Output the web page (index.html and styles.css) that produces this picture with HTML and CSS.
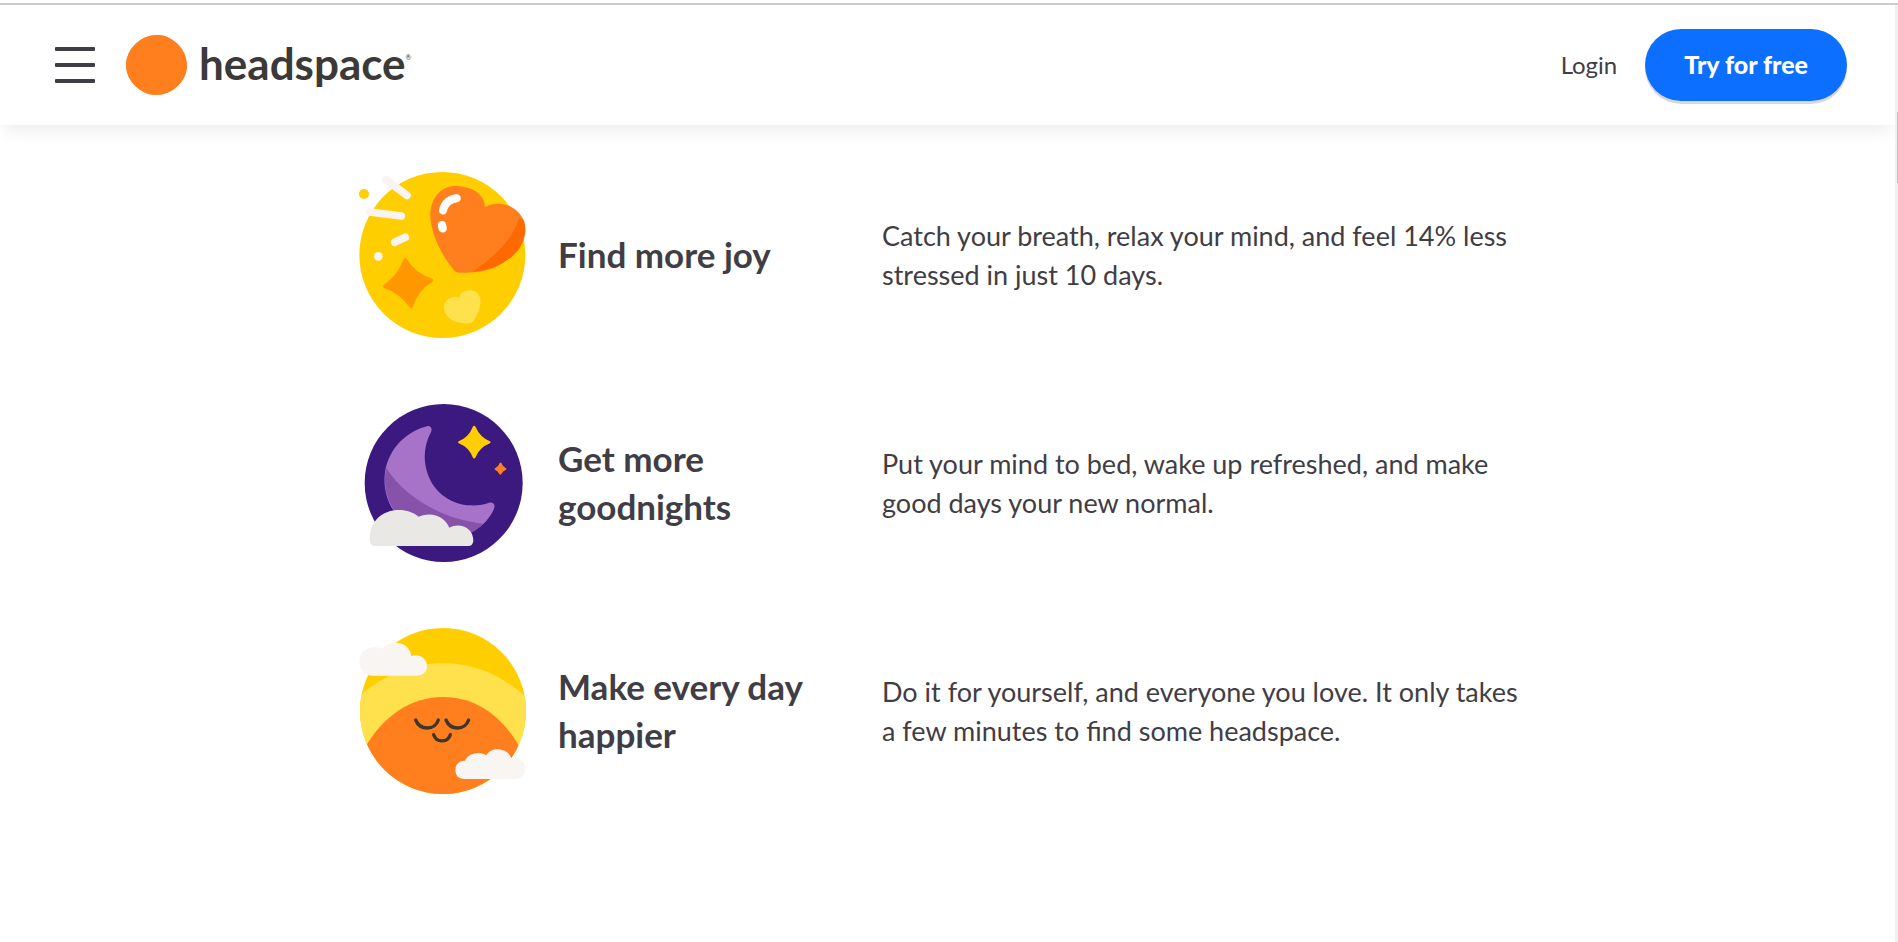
FILE: index.html
```html
<!DOCTYPE html>
<html lang="en">
<head>
<meta charset="utf-8">
<title>Headspace</title>
<link rel="stylesheet" href="styles.css">
</head>
<body>
<div class="window">
  <div class="page">
    <header class="header">
      <button class="menu" type="button" aria-label="Menu"><span class="bar"></span><span class="bar"></span><span class="bar"></span></button>
      <a class="logo" href="#">
        <svg class="logo-dot" viewBox="0 0 61 60" aria-hidden="true"><path fill="#ff7f1f" d="M32 0C39 0 45 3 51 9C57 15 61 22 61 31C61 39 57 46 51 51C44 57 38 60 29 60C21 60 15 56 9 50C3 44 0 38 0 30C0 22 4 14 10 9C16 3 23 0 32 0Z"/><ellipse cx="30.5" cy="30" rx="30.2" ry="29.8" fill="#ff7f1f"/></svg>
        <span class="wordmark">headspace</span><span class="mark">®</span>
      </a>
      <nav class="actions">
        <a class="login" href="#">Login</a>
        <button class="cta" type="button">Try for free</button>
      </nav>
    </header>
    <main class="benefits">
      <section class="benefit">
        <svg class="art" viewBox="45 0 540 570" aria-hidden="true">
          <circle cx="310" cy="285" r="249" fill="#ffce00"/>
          <circle cx="75" cy="102" r="15" fill="#ffce00"/>
          <g stroke="#f9f4f2" stroke-width="23" stroke-linecap="round"><path d="M141 59L204 106M92 156L187 168M167 247L199 232"/></g>
          <circle cx="118" cy="289" r="13" fill="#f9f4f2"/>
          <path fill="#ff9800" d="M194 297Q199 291 204 298Q229 340 281 357Q285 361 280 366Q237 390 221 442Q217 447 212 442Q184 401 134 383Q130 379 134 375Q175 347 194 297Z"/>
          <path fill="#ff7f1f" d="M347 333C316 298 266 215 275 148C288 87 330 72 372 80C412 86 437 110 438 141C480 119 535 134 555 183C568 240 528 290 478 317C432 339 391 338 360 338Q352 338 347 333Z"/>
          <path fill="#ff6a00" d="M540 174C523 235 470 287 402 335C455 331 510 308 542 265C563 230 561 203 555 183Q549 174 540 174Z"/>
          <path d="M312 151Q320 119 353 115" fill="none" stroke="#fff" stroke-width="24" stroke-linecap="round"/>
          <path d="M309 195L311 205" fill="none" stroke="#fff" stroke-width="25" stroke-linecap="round"/>
          <path fill="#ffe04d" d="M400 486C415 470 427 438 424 417C420 398 408 391 392 391C376 391 362 400 361 413C342 404 321 417 315 434C310 456 327 474 345 483C363 491 380 490 394 490Z"/>
        </svg>
        <h2 class="title">Find more joy</h2>
        <p class="text">Catch your breath, relax your mind, and feel 14% less stressed in just 10 days.</p>
      </section>
      <section class="benefit">
        <svg class="art" viewBox="45 -6 540 570" aria-hidden="true">
          <circle cx="314" cy="279" r="237" fill="#3b197f"/>
          <path fill="#a673c9" d="M259 110C272 103 282 113 276 126C255 165 252 210 265 248C284 310 340 344 394 346C418 347 437 343 451 338C463 336 470 345 465 356C436 425 354 456 274 438C190 420 130 343 137 257C142 190 190 129 259 110Z"/>
          <path fill="#8753aa" d="M142 235C200 325 315 389 433 401C385 452 303 455 240 426C165 393 125 309 142 235Z"/>
          <path fill="#ffce00" d="M401 111Q405 104 410 111Q423 142 453 154Q457 157 453 160Q422 172 410 202Q405 209 401 202Q390 172 359 160Q355 157 359 154Q390 141 401 111Z"/>
          <path fill="#ff7f1f" d="M482 219Q484 216 487 219Q491 230 501 235Q504 237 501 239Q491 243 487 252Q484 256 481 252Q477 243 468 239Q465 237 468 235Q478 231 482 219Z"/>
          <path fill="#e9e8e4" d="M106 468Q92 467 92 447C92 392 132 360 180 360C203 360 223 367 239 380C281 362 319 382 331 413C362 397 404 413 403 453Q401 468 388 468Z"/>
        </svg>
        <h2 class="title">Get more goodnights</h2>
        <p class="text">Put your mind to bed, wake up refreshed, and make good days your new normal.</p>
      </section>
      <section class="benefit">
        <svg class="art" viewBox="45 3 540 570" aria-hidden="true">
          <clipPath id="sky"><circle cx="312" cy="288" r="249"/></clipPath>
          <g clip-path="url(#sky)">
            <path fill="#ffce00" d="M50 30H570V550H50Z"/>
            <path fill="#ffe04d" d="M50 254C130 178 220 145 312 145C406 145 492 180 574 258V550H50Z"/>
            <path fill="#ff7f1f" d="M70 412C130 299 220 246 312 246C406 246 492 298 550 412V550H70Z"/>
          </g>
          <g fill="none" stroke="#3e352e" stroke-width="10" stroke-linecap="round"><path d="M230 315C243 347 287 347 298 315M321 315C334 347 377 347 389 315M284 359C291 384 327 384 334 359"/></g>
          <path fill="#f8f5f3" d="M102 182C73 181 61 161 61 139C61 105 96 88 130 101C155 72 211 79 217 123C240 115 264 129 264 153C264 172 250 182 233 182Z"/>
          <path fill="#f8f5f3" d="M377 492C358 492 349 480 349 465C349 447 362 436 378 437C388 415 419 407 442 421C458 394 506 398 517 430C542 424 559 440 559 461C558 480 546 491 527 492Z"/>
        </svg>
        <h2 class="title">Make every day happier</h2>
        <p class="text">Do it for yourself, and everyone you love. It only takes a few minutes to find some headspace.</p>
      </section>
    </main>
  </div>
  <div class="track" aria-hidden="true"><div class="thumb"></div></div>
</div>
</body>
</html>
```
FILE: styles.css
```css
* { box-sizing: border-box; }
body {
  margin: 0;
  padding-top: 3px;
  background: #fff;
  color: #413d45;
  font-family: Lato, "Open Sans", sans-serif;
}
.window {
  display: flex;
  min-height: calc(100vh - 3px);
  border-top: 2px solid #ccc;
}
.page { flex: 1; min-width: 0; }
.header {
  display: flex;
  align-items: center;
  min-height: 120px;
  padding: 0 48px 0 55px;
  box-shadow: 0 10px 16px -4px rgba(0, 0, 0, 0.07);
}
.menu {
  display: flex;
  flex-direction: column;
  gap: 12px;
  width: 40px;
  padding: 0;
  border: 0;
  background: none;
}
.bar { height: 4px; border-radius: 1px; background: #413d45; }
.logo {
  display: flex;
  align-items: center;
  margin-left: 31px;
  color: #3b3a38;
  text-decoration: none;
}
.logo-dot { width: 61px; height: 60px; margin-right: 12px; }
.wordmark { padding-bottom: 4px; font-size: 44px; line-height: 56px; font-weight: 700; }
.mark { align-self: flex-start; margin-top: 16px; font-size: 7px; line-height: 12px; }
.actions { display: flex; align-items: center; gap: 28px; margin-left: auto; }
.login { padding-bottom: 2px; color: #413d45; font-size: 24px; text-decoration: none; }
.cta {
  min-height: 72px;
  padding: 0 39px 2px;
  border: 0;
  border-radius: 36px;
  background: #0c6fff;
  box-shadow: 0 3px 0 #d8d8d8;
  color: #fff;
  font: 900 25px Lato, "Open Sans", sans-serif;
}
.benefits {
  display: flex;
  flex-direction: column;
  gap: 38px;
  max-width: 1187px;
  margin: 0 auto;
  padding: 35px 0;
}
.benefit {
  display: grid;
  grid-template-columns: 180px 300px 1fr;
  align-items: center;
  column-gap: 24px;
}
.art { display: block; width: 180px; height: 190px; }
.title { margin: 0; padding-bottom: 2px; font-size: 35px; line-height: 48px; font-weight: 700; }
.text { margin: 0; padding-right: 16px; font-size: 27px; line-height: 39px; }
.track { width: 3px; padding: 107px 0 0 2px; background: #f1f1f1; }
.thumb { height: 71px; background: #c1c1c1; }
```
